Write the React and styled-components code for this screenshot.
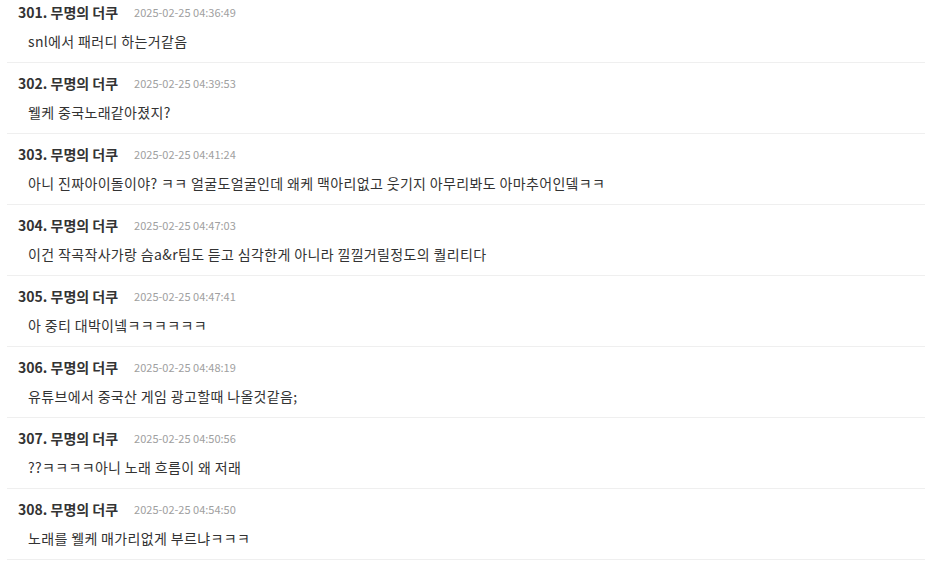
import React from "react";
import styled, { createGlobalStyle } from "styled-components";

const Global = createGlobalStyle`
  html, body { margin: 0; padding: 0; background: #fff; }
  body { font-family: "Noto Sans CJK KR", "Noto Sans", sans-serif; overflow: hidden; }
`;

const List = styled.ul`
  list-style: none;
  margin: -8px 0 0 7px;
  padding: 0;
`;

const Row = styled.li`
  padding: 10px 0 10px 11px;
  border-bottom: 1px solid #efefef;
  display: flex;
  flex-direction: column;
  gap: 8px;
`;

const Header = styled.div`
  display: flex;
  align-items: center;
  height: 21px;
`;

const Name = styled.span`
  font-size: 14px;
  font-weight: 700;
  color: #333;
  line-height: 21px;
`;

const Time = styled.span`
  margin-left: 16px;
  font-size: 11px;
  color: #a0a0a0;
  line-height: 21px;
`;

const Body = styled.div`
  padding-left: 10px;
  font-size: 14px;
  letter-spacing: 0.35px;
  color: #333;
  line-height: 21px;
`;

const comments = [
  { n: 301, t: "2025-02-25 04:36:49", c: "snl에서 패러디 하는거같음" },
  { n: 302, t: "2025-02-25 04:39:53", c: "웰케 중국노래같아졌지?" },
  { n: 303, t: "2025-02-25 04:41:24", c: "아니 진짜아이돌이야? ㅋㅋ 얼굴도얼굴인데 왜케 맥아리없고 웃기지 아무리봐도 아마추어인뎈ㅋㅋ" },
  { n: 304, t: "2025-02-25 04:47:03", c: "이건 작곡작사가랑 슴a&r팀도 듣고 심각한게 아니라 낄낄거릴정도의 퀄리티다" },
  { n: 305, t: "2025-02-25 04:47:41", c: "아 중티 대박이넼ㅋㅋㅋㅋㅋㅋ" },
  { n: 306, t: "2025-02-25 04:48:19", c: "유튜브에서 중국산 게임 광고할때 나올것같음;" },
  { n: 307, t: "2025-02-25 04:50:56", c: "??ㅋㅋㅋㅋ아니 노래 흐름이 왜 저래" },
  { n: 308, t: "2025-02-25 04:54:50", c: "노래를 웰케 매가리없게 부르냐ㅋㅋㅋ" },
];

export default function App() {
  return (
    <>
      <Global />
      <List>
        {comments.map((x) => (
          <Row key={x.n}>
            <Header>
              <Name>{x.n}. 무명의 더쿠</Name>
              <Time>{x.t}</Time>
            </Header>
            <Body>{x.c}</Body>
          </Row>
        ))}
      </List>
    </>
  );
}
